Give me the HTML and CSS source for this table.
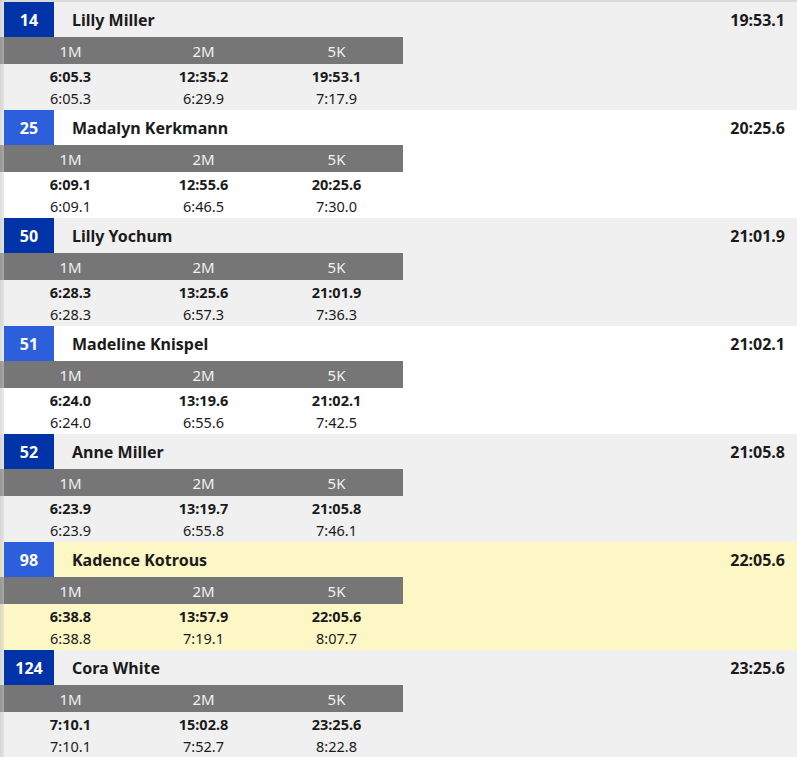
FILE: index.html
```html
<!DOCTYPE html>
<html>
<head>
<meta charset="utf-8">
<link rel="stylesheet" href="styles.css">
</head>
<body>
<div class="page">
  <div class="topline"></div>
  <div class="list">
    <div class="row alt0">
      <div class="head"><div class="bib dark">14</div><div class="name">Lilly Miller</div><div class="final">19:53.1</div></div>
      <div class="splits"><div class="sh">1M</div><div class="sh">2M</div><div class="sh">5K</div></div>
      <div class="vals"><div class="v"><b>6:05.3</b><span>6:05.3</span></div><div class="v"><b>12:35.2</b><span>6:29.9</span></div><div class="v"><b>19:53.1</b><span>7:17.9</span></div></div>
    </div>
    <div class="row alt1">
      <div class="head"><div class="bib light">25</div><div class="name">Madalyn Kerkmann</div><div class="final">20:25.6</div></div>
      <div class="splits"><div class="sh">1M</div><div class="sh">2M</div><div class="sh">5K</div></div>
      <div class="vals"><div class="v"><b>6:09.1</b><span>6:09.1</span></div><div class="v"><b>12:55.6</b><span>6:46.5</span></div><div class="v"><b>20:25.6</b><span>7:30.0</span></div></div>
    </div>
    <div class="row alt0">
      <div class="head"><div class="bib dark">50</div><div class="name">Lilly Yochum</div><div class="final">21:01.9</div></div>
      <div class="splits"><div class="sh">1M</div><div class="sh">2M</div><div class="sh">5K</div></div>
      <div class="vals"><div class="v"><b>6:28.3</b><span>6:28.3</span></div><div class="v"><b>13:25.6</b><span>6:57.3</span></div><div class="v"><b>21:01.9</b><span>7:36.3</span></div></div>
    </div>
    <div class="row alt1">
      <div class="head"><div class="bib light">51</div><div class="name">Madeline Knispel</div><div class="final">21:02.1</div></div>
      <div class="splits"><div class="sh">1M</div><div class="sh">2M</div><div class="sh">5K</div></div>
      <div class="vals"><div class="v"><b>6:24.0</b><span>6:24.0</span></div><div class="v"><b>13:19.6</b><span>6:55.6</span></div><div class="v"><b>21:02.1</b><span>7:42.5</span></div></div>
    </div>
    <div class="row alt0">
      <div class="head"><div class="bib dark">52</div><div class="name">Anne Miller</div><div class="final">21:05.8</div></div>
      <div class="splits"><div class="sh">1M</div><div class="sh">2M</div><div class="sh">5K</div></div>
      <div class="vals"><div class="v"><b>6:23.9</b><span>6:23.9</span></div><div class="v"><b>13:19.7</b><span>6:55.8</span></div><div class="v"><b>21:05.8</b><span>7:46.1</span></div></div>
    </div>
    <div class="row hl">
      <div class="head"><div class="bib light">98</div><div class="name">Kadence Kotrous</div><div class="final">22:05.6</div></div>
      <div class="splits"><div class="sh">1M</div><div class="sh">2M</div><div class="sh">5K</div></div>
      <div class="vals"><div class="v"><b>6:38.8</b><span>6:38.8</span></div><div class="v"><b>13:57.9</b><span>7:19.1</span></div><div class="v"><b>22:05.6</b><span>8:07.7</span></div></div>
    </div>
    <div class="row alt0">
      <div class="head"><div class="bib dark">124</div><div class="name">Cora White</div><div class="final">23:25.6</div></div>
      <div class="splits"><div class="sh">1M</div><div class="sh">2M</div><div class="sh">5K</div></div>
      <div class="vals"><div class="v"><b>7:10.1</b><span>7:10.1</span></div><div class="v"><b>15:02.8</b><span>7:52.7</span></div><div class="v"><b>23:25.6</b><span>8:22.8</span></div></div>
    </div>
  </div>
  <div class="edge"></div>
</div>
</body>
</html>
```
FILE: styles.css
```css
* { box-sizing: border-box; }
html, body { margin: 0; padding: 0; }
body {
  font-family: "Noto Sans", "Open Sans", sans-serif;
  background: #f0f0f0;
  color: #1b1b1b;
  width: 797px;
  height: 757px;
  overflow: hidden;
}
.page { position: relative; }
.topline { height: 2px; background: #dadada; }
.list { display: flex; flex-direction: column; }
.row { height: 108px; display: flex; flex-direction: column; }
.alt0 { background: #f0f0f0; }
.alt1 { background: #ffffff; }
.hl { background: #fdf7c5; }
.head { height: 35px; display: flex; align-items: center; padding-left: 4px; }
.bib {
  width: 50px; height: 35px;
  display: flex; align-items: center; justify-content: center;
  color: #fff; font-weight: 700; font-size: 16px;
}
.dark { background: #0033a8; }
.light { background: #2d5fdc; }
.name { font-weight: 700; font-size: 16px; margin-left: 18px; flex: 1; }
.final { font-weight: 700; font-size: 16px; margin-right: 12px; }
.splits {
  width: 403px; height: 27px; background: #767676;
  display: flex; padding-left: 4px;
}
.sh {
  width: 133px; display: flex; align-items: center; justify-content: center;
  color: #f0f0f0; font-size: 15px;
}
.vals { display: flex; padding-left: 4px; padding-top: 1px; }
.v {
  width: 133px; display: flex; flex-direction: column; align-items: center;
  font-size: 14.5px; line-height: 22px;
}
.v b { font-weight: 700; }
.edge {
  position: absolute; left: 0; top: 0; width: 4px; height: 757px;
  background: linear-gradient(to right, #b8b8b8, #d8d8d8);
  opacity: 0.5;
}
```
